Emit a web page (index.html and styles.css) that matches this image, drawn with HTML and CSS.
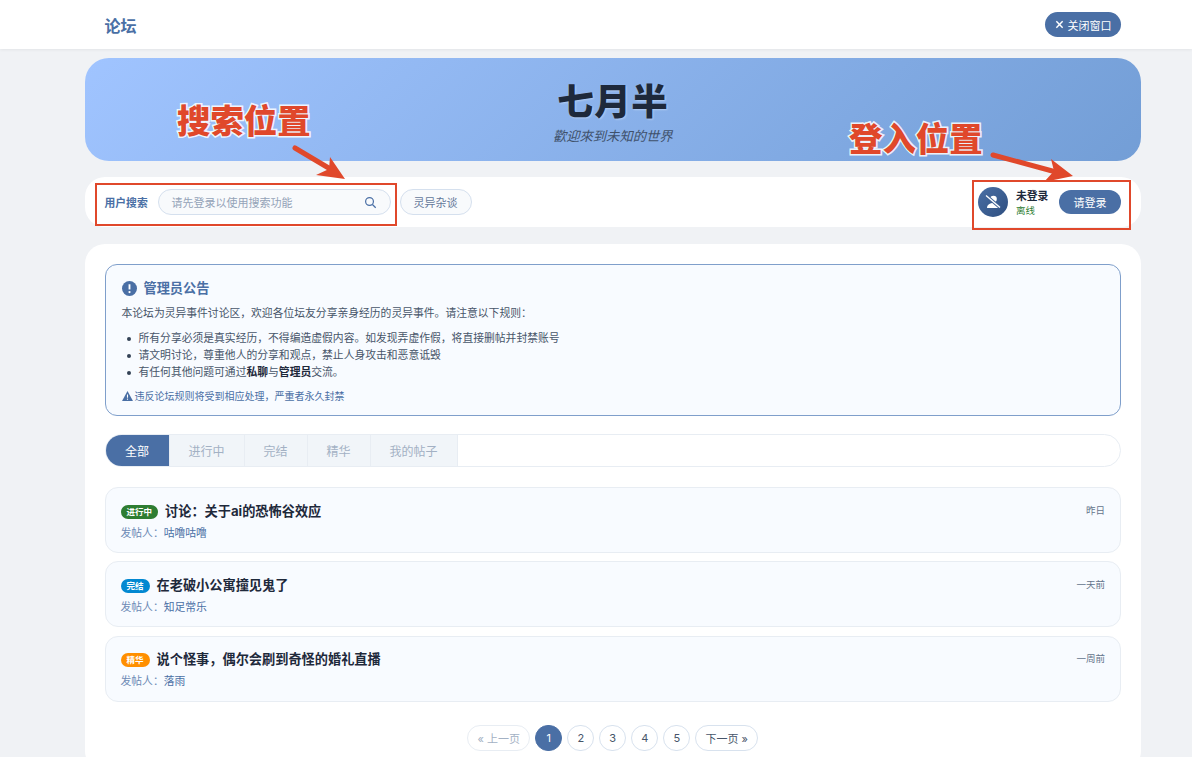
FILE: index.html
```html
<!DOCTYPE html>
<html>

<head>
  <title>论坛</title>
  <link rel="stylesheet" href="styles.css">
</head>

<body>
  <header class="topbar">
    <span class="brand">论坛</span>
    <button class="close-btn">
      <svg class="close-icon" viewBox="0 0 10 10"><path d="M1.5 1.5l7 7M8.500 1.500l-7 7" /></svg>
      关闭窗口
    </button>
  </header>

  <div class="page">
    <section class="banner">
      <h1>七月半</h1>
      <p>歡迎來到未知的世界</p>
    </section>

    <section class="toolbar">
      <span class="search-label">用户搜索</span>
      <div class="search-box">
        <span class="search-hint">请先登录以使用搜索功能</span>
        <svg class="search-icon" viewBox="0 0 16 16"><circle cx="6.800" cy="6.800" r="4.800" /><path d="M10.400 10.400l4 4" /></svg>
      </div>
      <button class="cat-btn">灵异杂谈</button>
      <div class="user-panel">
        <span class="avatar">
          <svg viewBox="0 0 20 20">
            <circle cx="10.500" cy="7" r="3.300" fill="#fff" />
            <path d="M4 16c0-3.500 3-5 6.500-5s6 1.500 6 5z" fill="#fff" />
            <path d="M3 3.500l14 12" stroke="#3f6295" stroke-width="3.200" />
            <path d="M3 3.500l14 12" stroke="#fff" stroke-width="1.400" />
          </svg>
        </span>
        <div class="user-text">
          <strong>未登录</strong>
          <span>离线</span>
        </div>
        <button class="login-btn">请登录</button>
      </div>
    </section>

    <main class="content">
      <div class="notice">
        <h3>
          <svg class="notice-icon" viewBox="0 0 16 16"><circle cx="8" cy="8" r="8" fill="#4a6fa5" /><path d="M8 3.500v5.500" stroke="#fff" stroke-width="2" /><circle cx="8" cy="11.800" r="1.200" fill="#fff" /></svg>
          管理员公告
        </h3>
        <p>本论坛为灵异事件讨论区，欢迎各位坛友分享亲身经历的灵异事件。请注意以下规则：</p>
        <ul>
          <li>所有分享必须是真实经历，不得编造虚假内容。如发现弄虚作假，将直接删帖并封禁账号</li>
          <li>请文明讨论，尊重他人的分享和观点，禁止人身攻击和恶意诋毁</li>
          <li><span>有任何其他问题可通过<b>私聊</b>与<b>管理员</b>交流。</span></li>
        </ul>
        <div class="notice-warn">
          <svg viewBox="0 0 12 11"><path d="M6 0l6 11H0z" fill="#4a6fa5" /><path d="M6 3.800v3.600" stroke="#fff" stroke-width="1.200" /><circle cx="6" cy="9" r=".7" fill="#fff" /></svg>
          违反论坛规则将受到相应处理，严重者永久封禁
        </div>
      </div>

      <nav class="tabs">
        <a class="tab active">全部</a>
        <a class="tab">进行中</a>
        <a class="tab">完结</a>
        <a class="tab">精华</a>
        <a class="tab">我的帖子</a>
      </nav>

      <div class="post-list">
        <article class="post">
          <div class="post-main">
            <div class="post-title"><span class="badge green">进行中</span>讨论：关于ai的恐怖谷效应</div>
            <div class="post-author">发帖人：<span>咕噜咕噜</span></div>
          </div>
          <span class="post-time">昨日</span>
        </article>
        <article class="post">
          <div class="post-main">
            <div class="post-title"><span class="badge blue">完结</span>在老破小公寓撞见鬼了</div>
            <div class="post-author">发帖人：<span>知足常乐</span></div>
          </div>
          <span class="post-time">一天前</span>
        </article>
        <article class="post">
          <div class="post-main">
            <div class="post-title"><span class="badge orange">精华</span>说个怪事，偶尔会刷到奇怪的婚礼直播</div>
            <div class="post-author">发帖人：<span>落雨</span></div>
          </div>
          <span class="post-time">一周前</span>
        </article>
      </div>

      <div class="pager">
        <a class="page-btn wide disabled">« 上一页</a>
        <a class="page-btn current">1</a>
        <a class="page-btn">2</a>
        <a class="page-btn">3</a>
        <a class="page-btn">4</a>
        <a class="page-btn">5</a>
        <a class="page-btn wide">下一页 »</a>
      </div>
    </main>
  </div>

  <!-- red notes drawn over the page -->
  <div class="note-text search-note">搜索位置</div>
  <div class="note-text login-note">登入位置</div>
  <div class="note-box search-frame"></div>
  <div class="note-box login-frame"></div>
  <svg class="note-arrow search-arrow" viewBox="0 0 60 40">
    <path d="M3 3L40 25" stroke="#e0482b" stroke-width="5" stroke-linecap="round" />
    <path d="M53 34L24 30L37 24L38 12z" fill="#e0482b" />
  </svg>
  <svg class="note-arrow login-arrow" viewBox="0 0 90 30">
    <path d="M3 3L66 20" stroke="#e0482b" stroke-width="5" stroke-linecap="round" />
    <path d="M83 24L54 30L64 19L61 7z" fill="#e0482b" />
  </svg>
</body>

</html>
```

FILE: styles.css
```css
* {
  box-sizing: border-box;
  font-family: Inter, "Noto Sans CJK SC", sans-serif;
}

html,
body {
  height: 100%;
}

body {
  margin: 0;
  background-color: #f0f2f5;
  color: #1e293b;
  overflow: hidden;
}

button {
  border: none;
  cursor: pointer;
}

.topbar {
  height: 49px;
  background-color: white;
  display: flex;
  align-items: center;
  justify-content: space-between;
  padding: 0 71px 0 104.500px;
  box-shadow: 0 1px 3px rgba(0, 0, 0, 0.06);
}

.brand {
  color: #4a6fa5;
  font-size: 16px;
  font-weight: bold;
}

.close-btn {
  width: 76px;
  height: 25px;
  border-radius: 13px;
  background-color: #4a6fa5;
  color: white;
  font-size: 11px;
  display: flex;
  align-items: center;
  justify-content: center;
  gap: 4px;
  padding: 0;
}

.close-icon {
  width: 9px;
  height: 9px;
  fill: none;
  stroke: white;
  stroke-width: 1.600;
}

.page {
  margin: 9px 51px 0 84.500px;
}

.banner {
  height: 103px;
  border-radius: 24px;
  background: linear-gradient(135deg, #a0c4ff, #739ed6);
  text-align: center;
  padding-top: 22px;
  margin-bottom: 16px;
}

.banner h1 {
  margin: 0;
  font-size: 36.500px;
  line-height: 45px;
  font-weight: 900;
  color: #1e293b;
  letter-spacing: 0.500px;
  text-shadow: 1px 1px 2px rgba(255, 255, 255, 0.35);
}

.banner p {
  margin: 3px 0 0;
  font-size: 13.300px;
  line-height: 17px;
  font-style: italic;
  color: #3f516b;
}

.toolbar {
  height: 50px;
  background-color: white;
  border-radius: 20px;
  display: flex;
  align-items: center;
  padding: 0 20px;
}

.search-label {
  width: 53px;
  color: #4a6fa5;
  font-size: 10.800px;
  font-weight: bold;
}

.search-box {
  width: 233px;
  height: 26px;
  border: 1px solid #d5e0ee;
  border-radius: 13px;
  background-color: #f8fafc;
  display: flex;
  align-items: center;
  justify-content: space-between;
  padding: 0 13px;
  margin-right: 9px;
}

.search-hint {
  font-size: 11px;
  color: #94a3b8;
}

.search-icon {
  width: 13px;
  height: 13px;
  fill: none;
  stroke: #4a6fa5;
  stroke-width: 1.500;
}

.cat-btn {
  width: 72px;
  height: 26px;
  border: 1px solid #d5e0ee;
  border-radius: 13px;
  background-color: #f8fafc;
  color: #64789a;
  font-size: 11px;
  padding: 0;
}

.user-panel {
  margin-left: auto;
  display: flex;
  align-items: center;
}

.avatar {
  width: 30px;
  height: 30px;
  border-radius: 50%;
  background: linear-gradient(135deg, #4a6fa5, #2f4f80);
  display: flex;
  align-items: center;
  justify-content: center;
  margin-right: 8px;
}

.avatar svg {
  width: 20px;
  height: 20px;
}

.user-text {
  width: 43px;
  display: flex;
  flex-direction: column;
  padding-top: 2px;
}

.user-text strong {
  font-size: 10.800px;
  line-height: 14px;
}

.user-text span {
  font-size: 9.500px;
  line-height: 13px;
  color: #2e7d32;
}

.login-btn {
  width: 62px;
  height: 24px;
  border-radius: 12px;
  background-color: #4a6fa5;
  color: white;
  font-size: 11px;
  padding: 0;
}

.content {
  margin-top: 17px;
  background-color: white;
  border-radius: 20px;
  padding: 20px;
}

.notice {
  height: 152px;
  border: 1px solid #7f9fcb;
  border-radius: 12px;
  background-color: #f8fbff;
  padding: 13px 16px 0;
  margin-bottom: 18px;
}

.notice h3 {
  margin: 0 0 7px;
  display: flex;
  align-items: center;
  gap: 7px;
  color: #4a6fa5;
  font-size: 13.200px;
  line-height: 20px;
  font-weight: bold;
}

.notice-icon {
  width: 15px;
  height: 15px;
}

.notice p {
  margin: 0 0 8px;
  font-size: 10.800px;
  line-height: 17px;
  color: #475569;
}

.notice ul {
  margin: 0 0 7px;
  padding: 0;
  list-style: none;
}

.notice li {
  display: flex;
  align-items: center;
  gap: 8px;
  padding-left: 5px;
  font-size: 10.800px;
  line-height: 17px;
  color: #475569;
}

.notice li::before {
  content: "";
  width: 4px;
  height: 4px;
  border-radius: 50%;
  background-color: #334155;
}

.notice b {
  color: #1e293b;
}

.notice-warn {
  display: flex;
  align-items: center;
  gap: 2px;
  color: #4a6fa5;
  font-size: 10px;
  line-height: 16px;
}

.notice-warn svg {
  width: 11px;
  height: 10px;
}

.tabs {
  height: 33px;
  display: flex;
  border: 1px solid #e8edf3;
  border-radius: 17px;
  overflow: hidden;
  margin-bottom: 20px;
}

.tab {
  padding: 0 19px;
  font-size: 12px;
  line-height: 33px;
  color: #a3b1c4;
  background-color: #f1f5f9;
  border-right: 1px solid #e8edf3;
}

.tab.active {
  padding: 0 19.500px 0 19.500px;
  color: white;
  background-color: #4a6fa5;
}

.post-list {
  display: flex;
  flex-direction: column;
  gap: 8.300px;
}

.post {
  height: 66px;
  border: 1px solid #e8edf3;
  border-radius: 13px;
  background-color: #f8fbff;
  display: flex;
  justify-content: space-between;
  padding: 12.500px 15px 0;
}

.post-title {
  display: flex;
  align-items: center;
  font-size: 13.200px;
  line-height: 20px;
  font-weight: bold;
  color: #1e293b;
}

.badge {
  height: 14px;
  margin-top: 2px;
  border-radius: 7px;
  color: white;
  font-size: 8.500px;
  line-height: 14px;
  font-weight: bold;
  padding: 0 6px;
  margin-right: 7px;
}

.badge.green {
  background-color: #2e7d32;
}

.badge.blue {
  background-color: #0288d1;
}

.badge.orange {
  background-color: #ff8f00;
}

.post-author {
  margin-top: 5px;
  font-size: 10.800px;
  line-height: 16px;
  color: #6c8ab5;
}

.post-author span {
  color: #4a6fa5;
}

.post-time {
  font-size: 9.500px;
  line-height: 20px;
  color: #64748b;
}

.pager {
  margin-top: 23px;
  display: flex;
  justify-content: center;
  gap: 5px;
}

.page-btn {
  width: 27px;
  height: 26px;
  border: 1px solid #d8e2ee;
  border-radius: 14px;
  background-color: white;
  color: #475569;
  font-size: 11px;
  display: flex;
  align-items: center;
  justify-content: center;
}

.page-btn.wide {
  width: 63px;
}

.page-btn.disabled {
  border-color: #e8edf3;
  color: #a3b1c4;
}

.page-btn.current {
  background-color: #4a6fa5;
  border-color: #4a6fa5;
  color: white;
}

.note-text {
  position: absolute;
  font-size: 33.400px;
  line-height: 36px;
  font-weight: 900;
  color: #e0482b;
  -webkit-text-stroke: 3px rgba(255, 255, 255, 0.85);
  paint-order: stroke fill;
}

.search-note {
  left: 177px;
  top: 103px;
}

.login-note {
  left: 849px;
  top: 121px;
}

.note-box {
  position: absolute;
  border: 2px solid #e0482b;
}

.search-frame {
  left: 95px;
  top: 183px;
  width: 302px;
  height: 43px;
}

.login-frame {
  left: 972px;
  top: 180px;
  width: 159px;
  height: 50px;
}

.note-arrow {
  position: absolute;
}

.search-arrow {
  left: 292px;
  top: 145px;
  width: 60px;
  height: 40px;
}

.login-arrow {
  left: 990px;
  top: 152px;
  width: 90px;
  height: 30px;
}
```
